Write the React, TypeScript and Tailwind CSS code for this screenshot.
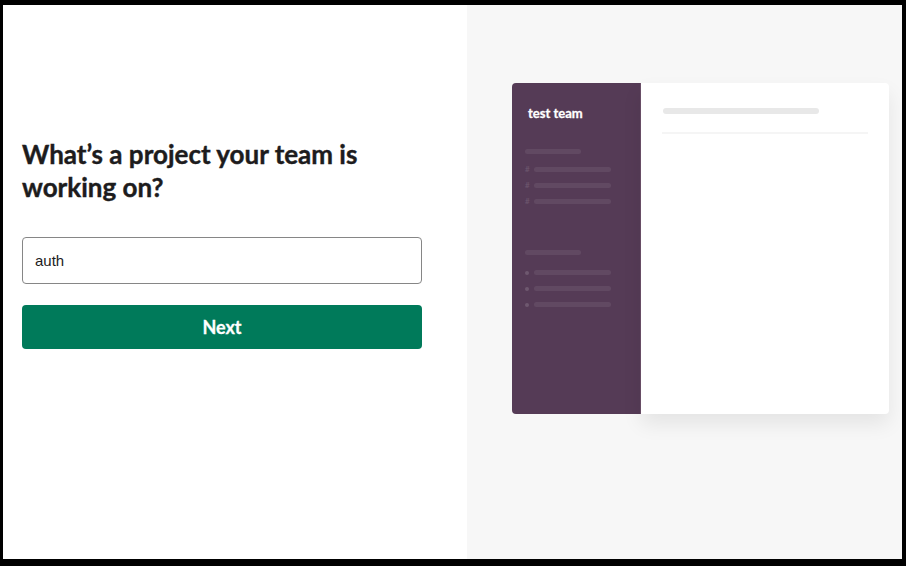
export default function App() {
  return (
    <div className="h-[566px] w-[906px] bg-black pt-[5px] pl-[3px] pr-[4px] pb-[7px]" style={{ fontFamily: "Lato, 'Noto Sans', sans-serif" }}>
      <div className="flex h-full w-full">
        {/* Left: form */}
        <div className="w-[464px] bg-white pl-[19px] pt-[133px]">
          <div className="w-[400px]">
            <h1 className="text-[26px] font-bold leading-[33px] text-[#1d1c1d] [-webkit-text-stroke:0.4px_#1d1c1d]">
              What’s a project your team is working on?
            </h1>
            <div className="mt-[33px] flex h-[47px] items-center rounded-[4px] border border-[#868686] pl-3 pt-[2px]">
              <span className="text-[15px] text-[#1d1c1d]" style={{ fontFamily: "'Liberation Sans', Arial, sans-serif" }}>auth</span>
            </div>
            <button className="mt-[21px] flex h-[44px] w-full items-center justify-center rounded-[4px] bg-[#007a5a] text-[18px] font-bold text-white [-webkit-text-stroke:0.3px_white]">
              Next
            </button>
          </div>
        </div>

        {/* Right: preview */}
        <div className="flex-1 bg-[#f7f7f7] pl-[45px] pt-[78px]">
          <div className="flex h-[331px] w-[377px]">
            <div className="w-[129px] rounded-l-[4px] border-r border-[#6b5069] bg-[#553b56] pl-[13px] pt-[22px]">
              <div className="pl-[3px] text-[13px] font-bold leading-4 text-white [-webkit-text-stroke:0.3px_white]">test team</div>
              <div className="mt-[28px] h-[5px] w-[56px] rounded-full bg-white/[0.07]" />
              <div className="mt-[13px] flex flex-col gap-[11px]">
                {[0, 1, 2].map((i) => (
                  <div key={i} className="flex items-center gap-[3px]">
                    <span className="w-[6px] text-[8px] leading-[5px] text-white/[0.14]">#</span>
                    <div className="h-[5px] w-[77px] rounded-full bg-white/[0.07]" />
                  </div>
                ))}
              </div>
              <div className="mt-[46px] h-[5px] w-[56px] rounded-full bg-white/[0.07]" />
              <div className="mt-[15px] flex flex-col gap-[11px]">
                {[0, 1, 2].map((i) => (
                  <div key={i} className="flex items-center gap-[5px]">
                    <div className="h-[4px] w-[4px] rounded-full bg-white/[0.15]" />
                    <div className="h-[5px] w-[77px] rounded-full bg-white/[0.07]" />
                  </div>
                ))}
              </div>
            </div>
            <div className="flex-1 rounded-r-[4px] bg-white px-[21px] pt-[25px] shadow-[0_10px_20px_rgba(0,0,0,0.08)]">
              <div className="ml-[1px] h-[6px] w-[156px] rounded-full bg-[#e8e8e8]" />
              <div className="mt-[18px] h-[2px] w-full bg-[#f5f5f5]" />
            </div>
          </div>
        </div>
      </div>
    </div>
  );
}
